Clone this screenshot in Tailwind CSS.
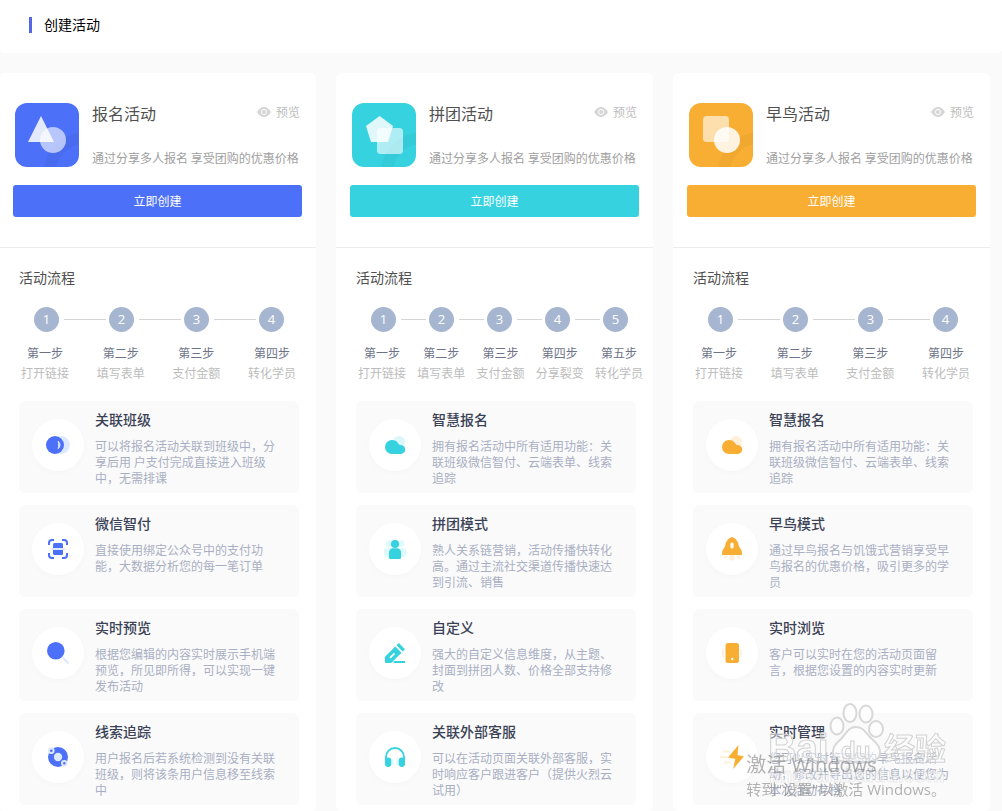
<!DOCTYPE html>
<html lang="zh-CN">
<head>
  <meta charset="UTF-8" />
  <meta name="viewport" content="width=device-width, initial-scale=1.0" />
  <title>创建活动</title>
  <script src="https://cdn.jsdelivr.net/npm/@tailwindcss/browser@4"></script>
</head>
<body class="overflow-x-hidden bg-[#fafafa] font-['Noto_Sans_CJK_SC',sans-serif] text-xs text-[#a9afc3]">

  <!-- Shared icons -->
  <svg class="hidden">
    <symbol id="eye" viewBox="0 0 14 10">
      <path d="M0 5C2 1.500 4.500 0 7 0s5 1.500 7 5c-2 3.500-4.500 5-7 5S2 8.500 0 5z" fill="#d6d6d6"/>
      <circle cx="7" cy="5" r="2.600" fill="none" stroke="#fff"/>
    </symbol>
    <symbol id="cloud" viewBox="0 0 24 24">
      <circle cx="16" cy="9" r="6" fill="currentColor" opacity=".18"/>
      <path d="M9 7a7 7 0 0 0 0 14h8.500a4.500 4.500 0 0 0 .5-9c-1.500 0-2.300-.6-3-2A7 7 0 0 0 9 7z" fill="currentColor"/>
    </symbol>
  </svg>

  <!-- Header -->
  <header class="flex h-[53px] items-center rounded-b bg-white pb-1 pl-[29px]">
    <span class="h-4 w-[3px] bg-[#5468e7]"></span>
    <h1 class="pb-0.5 pl-3 text-sm text-black">创建活动</h1>
  </header>

  <main class="-ml-px grid grid-cols-3 gap-5 pt-5 pr-3">
    <!-- 报名活动 -->
    <section class="rounded-md bg-white pb-1.5">
      <div class="border-b border-[#ececec] px-[14px] py-[30px]">
        <div class="flex gap-[13px] px-[2px]">
          <svg class="size-16 shrink-0 rounded-xl bg-[#4d70f8]" viewBox="0 0 64 64">
            <circle cx="70" cy="70" r="35" fill="none" stroke="#000" stroke-opacity=".04" stroke-width="12"/>
            <circle cx="38" cy="37" r="13" fill="#fff" opacity=".6"/>
            <path d="M26 13l13 26H13z" fill="#fff" opacity=".85"/>
          </svg>
          <div class="flex min-w-0 flex-1 flex-col justify-between">
            <div class="flex items-start justify-between">
              <h2 class="text-base leading-5 text-[#505050]">报名活动</h2>
              <a href="#" class="flex items-center gap-[5px] leading-[18px] text-[#bdbdbd]"><svg class="h-[10px] w-[14px]"><use href="#eye"/></svg>预览</a>
            </div>
            <p class="leading-[18px] whitespace-nowrap text-[#a0a0a0]">通过分享多人报名 享受团购的优惠价格</p>
          </div>
        </div>
        <button class="mt-[18px] h-8 w-full rounded-[3px] bg-[#4d70f8] text-white">立即创建</button>
      </div>
      <div class="pt-[19px]">
        <h3 class="pl-5 text-sm leading-5 text-[#505050]">活动流程</h3>
        <div class="mt-5 flex items-center pl-[35px] font-['Open_Sans',sans-serif] text-[13px] text-white">
          <span class="flex size-[25px] items-center justify-center rounded-full bg-[#a7b6d0]">1</span>
          <span class="mr-[3px] ml-[5px] h-px w-[42px] bg-[#d4d4d4]"></span>
          <span class="flex size-[25px] items-center justify-center rounded-full bg-[#a7b6d0]">2</span>
          <span class="mr-[3px] ml-[5px] h-px w-[42px] bg-[#d4d4d4]"></span>
          <span class="flex size-[25px] items-center justify-center rounded-full bg-[#a7b6d0]">3</span>
          <span class="mr-[3px] ml-[5px] h-px w-[42px] bg-[#d4d4d4]"></span>
          <span class="flex size-[25px] items-center justify-center rounded-full bg-[#a7b6d0]">4</span>
        </div>
        <ol class="mt-[11px] flex justify-between pr-5 pl-[22px] text-center leading-5 text-[#bcbcbc]">
          <li><p class="text-[#6d7489]">第一步</p>打开链接</li>
          <li><p class="text-[#6d7489]">第二步</p>填写表单</li>
          <li><p class="text-[#6d7489]">第三步</p>支付金额</li>
          <li><p class="text-[#6d7489]">第四步</p>转化学员</li>
        </ol>
      </div>
      <div class="mt-[18px] mr-[17px] ml-5 grid gap-3 text-[#4d70f8]">
        <article class="flex min-h-[92px] items-start gap-[11px] rounded-md bg-[#fafafa] pr-4 pl-[13px]">
          <div class="mt-[18px] flex size-[52px] shrink-0 items-center justify-center rounded-full bg-white shadow-[0_2px_6px_rgba(0,0,0,0.02)]">
            <svg class="size-6" viewBox="0 0 24 24">
              <circle cx="15" cy="12" r="9" fill="#dce8fe"/>
              <circle cx="9" cy="12" r="9" fill="currentColor"/>
              <path d="M12 8.300c2.600 1.800 2.600 5.600 0 7.400 1-2.500 1-4.900 0-7.400z" fill="#dce8fe" stroke="#dce8fe"/>
            </svg>
          </div>
          <div class="pt-2">
            <h4 class="text-sm leading-5 font-medium text-[#3b4256]">关联班级</h4>
            <p class="mt-[9px] leading-4 text-[#a9afc3]">可以将报名活动关联到班级中，分享后用 户支付完成直接进入班级中，无需排课</p>
          </div>
        </article>
        <article class="flex min-h-[92px] items-start gap-[11px] rounded-md bg-[#fafafa] pr-4 pl-[13px]">
          <div class="mt-[18px] flex size-[52px] shrink-0 items-center justify-center rounded-full bg-white shadow-[0_2px_6px_rgba(0,0,0,0.02)]">
            <svg class="size-6" viewBox="0 0 24 24">
              <path d="M3 8V6a3 3 0 0 1 3-3h2M16 3h2a3 3 0 0 1 3 3v2M21 16v2a3 3 0 0 1-3 3h-2M8 21H6a3 3 0 0 1-3-3v-2" fill="none" stroke="currentColor" stroke-width="2"/>
              <rect x="7" y="6" width="10" height="12" rx="1.500" fill="currentColor"/>
              <path d="M5 11h14v2H5z" fill="#dce8fe"/>
            </svg>
          </div>
          <div class="pt-2">
            <h4 class="text-sm leading-5 font-medium text-[#3b4256]">微信智付</h4>
            <p class="mt-[9px] leading-4 text-[#a9afc3]">直接使用绑定公众号中的支付功能，大数据分析您的每一笔订单</p>
          </div>
        </article>
        <article class="flex min-h-[92px] items-start gap-[11px] rounded-md bg-[#fafafa] pr-4 pl-[13px]">
          <div class="mt-[18px] flex size-[52px] shrink-0 items-center justify-center rounded-full bg-white shadow-[0_2px_6px_rgba(0,0,0,0.02)]">
            <svg class="size-6" viewBox="0 0 24 24">
              <path d="M17 17l5.500 5.500" stroke="#dce8fe" stroke-width="2"/>
              <circle cx="9.800" cy="9.800" r="8.800" fill="currentColor"/>
            </svg>
          </div>
          <div class="pt-2">
            <h4 class="text-sm leading-5 font-medium text-[#3b4256]">实时预览</h4>
            <p class="mt-[9px] leading-4 text-[#a9afc3]">根据您编辑的内容实时展示手机端预览，所见即所得，可以实现一键发布活动</p>
          </div>
        </article>
        <article class="flex min-h-[92px] items-start gap-[11px] rounded-md bg-[#fafafa] pr-4 pl-[13px]">
          <div class="mt-[18px] flex size-[52px] shrink-0 items-center justify-center rounded-full bg-white shadow-[0_2px_6px_rgba(0,0,0,0.02)]">
            <svg class="size-6" viewBox="0 0 24 24">
              <circle cx="12" cy="12" r="10" fill="currentColor"/>
              <circle cx="12" cy="12" r="4.200" fill="#dce8fe"/>
              <g fill="currentColor" stroke="#dce8fe" stroke-width="2">
                <circle cx="5.300" cy="5.700" r="2.300"/>
                <circle cx="18.300" cy="18.300" r="2.300"/>
              </g>
            </svg>
          </div>
          <div class="pt-2">
            <h4 class="text-sm leading-5 font-medium text-[#3b4256]">线索追踪</h4>
            <p class="mt-[9px] leading-4 text-[#a9afc3]">用户报名后若系统检测到没有关联班级，则将该条用户信息移至线索中</p>
          </div>
        </article>
      </div>
    </section>

    <!-- 拼团活动 -->
    <section class="rounded-md bg-white pb-1.5">
      <div class="border-b border-[#ececec] px-[14px] py-[30px]">
        <div class="flex gap-[13px] px-[2px]">
          <svg class="size-16 shrink-0 rounded-xl bg-[#36d2e0]" viewBox="0 0 64 64">
            <circle cx="70" cy="70" r="35" fill="none" stroke="#000" stroke-opacity=".03" stroke-width="12"/>
            <rect x="25" y="25" width="26" height="26" rx="3.500" fill="#fff" opacity=".6"/>
            <path d="M27.700 13L41 23l-5 16H19l-5-16z" fill="#fff" opacity=".85"/>
          </svg>
          <div class="flex min-w-0 flex-1 flex-col justify-between">
            <div class="flex items-start justify-between">
              <h2 class="text-base leading-5 text-[#505050]">拼团活动</h2>
              <a href="#" class="flex items-center gap-[5px] leading-[18px] text-[#bdbdbd]"><svg class="h-[10px] w-[14px]"><use href="#eye"/></svg>预览</a>
            </div>
            <p class="leading-[18px] whitespace-nowrap text-[#a0a0a0]">通过分享多人报名 享受团购的优惠价格</p>
          </div>
        </div>
        <button class="mt-[18px] h-8 w-full rounded-[3px] bg-[#36d2e0] text-white">立即创建</button>
      </div>
      <div class="pt-[19px]">
        <h3 class="pl-5 text-sm leading-5 text-[#505050]">活动流程</h3>
        <div class="mt-5 flex items-center pl-[35px] font-['Open_Sans',sans-serif] text-[13px] text-white">
          <span class="flex size-[25px] items-center justify-center rounded-full bg-[#a7b6d0]">1</span>
          <span class="mr-[3px] ml-[5px] h-px w-[25px] bg-[#d4d4d4]"></span>
          <span class="flex size-[25px] items-center justify-center rounded-full bg-[#a7b6d0]">2</span>
          <span class="mr-[3px] ml-[5px] h-px w-[25px] bg-[#d4d4d4]"></span>
          <span class="flex size-[25px] items-center justify-center rounded-full bg-[#a7b6d0]">3</span>
          <span class="mr-[3px] ml-[5px] h-px w-[25px] bg-[#d4d4d4]"></span>
          <span class="flex size-[25px] items-center justify-center rounded-full bg-[#a7b6d0]">4</span>
          <span class="mr-[3px] ml-[5px] h-px w-[25px] bg-[#d4d4d4]"></span>
          <span class="flex size-[25px] items-center justify-center rounded-full bg-[#a7b6d0]">5</span>
        </div>
        <ol class="mt-[11px] flex justify-between pr-[10px] pl-[22px] text-center leading-5 text-[#bcbcbc]">
          <li><p class="text-[#6d7489]">第一步</p>打开链接</li>
          <li><p class="text-[#6d7489]">第二步</p>填写表单</li>
          <li><p class="text-[#6d7489]">第三步</p>支付金额</li>
          <li><p class="text-[#6d7489]">第四步</p>分享裂变</li>
          <li><p class="text-[#6d7489]">第五步</p>转化学员</li>
        </ol>
      </div>
      <div class="mt-[18px] mr-[17px] ml-5 grid gap-3 text-[#36d2e0]">
        <article class="flex min-h-[92px] items-start gap-[11px] rounded-md bg-[#fafafa] pr-4 pl-[13px]">
          <div class="mt-[18px] flex size-[52px] shrink-0 items-center justify-center rounded-full bg-white shadow-[0_2px_6px_rgba(0,0,0,0.02)]">
            <svg class="size-6"><use href="#cloud"/></svg>
          </div>
          <div class="pt-2">
            <h4 class="text-sm leading-5 font-medium text-[#3b4256]">智慧报名</h4>
            <p class="mt-[9px] leading-4 text-[#a9afc3]">拥有报名活动中所有适用功能：关联班级微信智付、云端表单、线索追踪</p>
          </div>
        </article>
        <article class="flex min-h-[92px] items-start gap-[11px] rounded-md bg-[#fafafa] pr-4 pl-[13px]">
          <div class="mt-[18px] flex size-[52px] shrink-0 items-center justify-center rounded-full bg-white shadow-[0_2px_6px_rgba(0,0,0,0.02)]">
            <svg class="size-6" viewBox="0 0 24 24">
              <g fill="#dffafd">
                <rect x="2.700" y="3.500" width="18.600" height="6.500" rx="3"/>
                <rect x=".8" y="11" width="22.400" height="9" rx="3.500"/>
              </g>
              <circle cx="12" cy="7" r="4" fill="currentColor"/>
              <path d="M6 21v-5.500a4.500 4.500 0 0 1 3.500-4.300h5a4.500 4.500 0 0 1 3.500 4.300V21a1 1 0 0 1-1 1H7a1 1 0 0 1-1-1z" fill="currentColor"/>
            </svg>
          </div>
          <div class="pt-2">
            <h4 class="text-sm leading-5 font-medium text-[#3b4256]">拼团模式</h4>
            <p class="mt-[9px] leading-4 text-[#a9afc3]">熟人关系链营销，活动传播快转化高。通过主流社交渠道传播快速达到引流、销售</p>
          </div>
        </article>
        <article class="flex min-h-[92px] items-start gap-[11px] rounded-md bg-[#fafafa] pr-4 pl-[13px]">
          <div class="mt-[18px] flex size-[52px] shrink-0 items-center justify-center rounded-full bg-white shadow-[0_2px_6px_rgba(0,0,0,0.02)]">
            <svg class="size-6" viewBox="0 0 24 24">
              <path d="M12.300 5.500l6.200 6.200L8.200 22H3a1 1 0 0 1-1-1v-5.200zM13.500 4.300L15.800 2l6.200 6.200-2.300 2.300zM10.500 20H22v2H10.500z" fill="currentColor"/>
              <path d="M7 16.800l4.500-4.500" stroke="#fff" stroke-width="1.800"/>
            </svg>
          </div>
          <div class="pt-2">
            <h4 class="text-sm leading-5 font-medium text-[#3b4256]">自定义</h4>
            <p class="mt-[9px] leading-4 text-[#a9afc3]">强大的自定义信息维度，从主题、封面到拼团人数、价格全部支持修改</p>
          </div>
        </article>
        <article class="flex min-h-[92px] items-start gap-[11px] rounded-md bg-[#fafafa] pr-4 pl-[13px]">
          <div class="mt-[18px] flex size-[52px] shrink-0 items-center justify-center rounded-full bg-white shadow-[0_2px_6px_rgba(0,0,0,0.02)]">
            <svg class="size-6" viewBox="0 0 24 24">
              <path d="M9.500 14v6M14.500 14v6" stroke="#dffafd" stroke-width="2"/>
              <path d="M3 18v-6a9 9 0 0 1 18 0v6" fill="none" stroke="currentColor" stroke-width="1.800"/>
              <path d="M2 12.500h3a3.300 3.300 0 0 1 3.300 3.300v3a3.100 3.100 0 0 1-6.300 0zM22 12.500h-3a3.300 3.300 0 0 0-3.300 3.300v3a3.100 3.100 0 0 0 6.300 0z" fill="currentColor"/>
            </svg>
          </div>
          <div class="pt-2">
            <h4 class="text-sm leading-5 font-medium text-[#3b4256]">关联外部客服</h4>
            <p class="mt-[9px] leading-4 text-[#a9afc3]">可以在活动页面关联外部客服，实时响应客户跟进客户（提供火烈云试用）</p>
          </div>
        </article>
      </div>
    </section>

    <!-- 早鸟活动 -->
    <section class="rounded-md bg-white pb-1.5">
      <div class="border-b border-[#ececec] px-[14px] py-[30px]">
        <div class="flex gap-[13px] px-[2px]">
          <svg class="size-16 shrink-0 rounded-xl bg-[#f8ae33]" viewBox="0 0 64 64">
            <circle cx="70" cy="70" r="35" fill="none" stroke="#000" stroke-opacity=".03" stroke-width="12"/>
            <rect x="14" y="13" width="26" height="26" rx="3.500" fill="#fff" opacity=".6"/>
            <circle cx="38" cy="37" r="13" fill="#fff" opacity=".85"/>
          </svg>
          <div class="flex min-w-0 flex-1 flex-col justify-between">
            <div class="flex items-start justify-between">
              <h2 class="text-base leading-5 text-[#505050]">早鸟活动</h2>
              <a href="#" class="flex items-center gap-[5px] leading-[18px] text-[#bdbdbd]"><svg class="h-[10px] w-[14px]"><use href="#eye"/></svg>预览</a>
            </div>
            <p class="leading-[18px] whitespace-nowrap text-[#a0a0a0]">通过分享多人报名 享受团购的优惠价格</p>
          </div>
        </div>
        <button class="mt-[18px] h-8 w-full rounded-[3px] bg-[#f8ae33] text-white">立即创建</button>
      </div>
      <div class="pt-[19px]">
        <h3 class="pl-5 text-sm leading-5 text-[#505050]">活动流程</h3>
        <div class="mt-5 flex items-center pl-[35px] font-['Open_Sans',sans-serif] text-[13px] text-white">
          <span class="flex size-[25px] items-center justify-center rounded-full bg-[#a7b6d0]">1</span>
          <span class="mr-[3px] ml-[5px] h-px w-[42px] bg-[#d4d4d4]"></span>
          <span class="flex size-[25px] items-center justify-center rounded-full bg-[#a7b6d0]">2</span>
          <span class="mr-[3px] ml-[5px] h-px w-[42px] bg-[#d4d4d4]"></span>
          <span class="flex size-[25px] items-center justify-center rounded-full bg-[#a7b6d0]">3</span>
          <span class="mr-[3px] ml-[5px] h-px w-[42px] bg-[#d4d4d4]"></span>
          <span class="flex size-[25px] items-center justify-center rounded-full bg-[#a7b6d0]">4</span>
        </div>
        <ol class="mt-[11px] flex justify-between pr-5 pl-[22px] text-center leading-5 text-[#bcbcbc]">
          <li><p class="text-[#6d7489]">第一步</p>打开链接</li>
          <li><p class="text-[#6d7489]">第二步</p>填写表单</li>
          <li><p class="text-[#6d7489]">第三步</p>支付金额</li>
          <li><p class="text-[#6d7489]">第四步</p>转化学员</li>
        </ol>
      </div>
      <div class="mt-[18px] mr-[17px] ml-5 grid gap-3 text-[#f8ae33]">
        <article class="flex min-h-[92px] items-start gap-[11px] rounded-md bg-[#fafafa] pr-4 pl-[13px]">
          <div class="mt-[18px] flex size-[52px] shrink-0 items-center justify-center rounded-full bg-white shadow-[0_2px_6px_rgba(0,0,0,0.02)]">
            <svg class="size-6"><use href="#cloud"/></svg>
          </div>
          <div class="pt-2">
            <h4 class="text-sm leading-5 font-medium text-[#3b4256]">智慧报名</h4>
            <p class="mt-[9px] leading-4 text-[#a9afc3]">拥有报名活动中所有适用功能：关联班级微信智付、云端表单、线索追踪</p>
          </div>
        </article>
        <article class="flex min-h-[92px] items-start gap-[11px] rounded-md bg-[#fafafa] pr-4 pl-[13px]">
          <div class="mt-[18px] flex size-[52px] shrink-0 items-center justify-center rounded-full bg-white shadow-[0_2px_6px_rgba(0,0,0,0.02)]">
            <svg class="size-6" viewBox="0 0 24 24">
              <g fill="#fef0d9">
                <circle cx="12" cy="20.500" r="3"/>
                <circle cx="5.500" cy="20" r="1.500"/>
                <circle cx="18.500" cy="20" r="1.500"/>
              </g>
              <path d="M12 0C8.500 1 5.500 4.500 5.200 9L2.500 13.500Q2 14.500 2 18h20q0-3.500-.5-4.500L18.800 9C18.500 4.500 15.500 1 12 0z" fill="currentColor"/>
              <rect x="10.400" y="5.500" width="3.200" height="6" rx="1.600" fill="#fff"/>
            </svg>
          </div>
          <div class="pt-2">
            <h4 class="text-sm leading-5 font-medium text-[#3b4256]">早鸟模式</h4>
            <p class="mt-[9px] leading-4 text-[#a9afc3]">通过早鸟报名与饥饿式营销享受早鸟报名的优惠价格，吸引更多的学员</p>
          </div>
        </article>
        <article class="flex min-h-[92px] items-start gap-[11px] rounded-md bg-[#fafafa] pr-4 pl-[13px]">
          <div class="mt-[18px] flex size-[52px] shrink-0 items-center justify-center rounded-full bg-white shadow-[0_2px_6px_rgba(0,0,0,0.02)]">
            <svg class="size-6" viewBox="0 0 24 24">
              <path d="M3 8v8M21 8v8" stroke="#fef0d9" stroke-width="1.500"/>
              <rect x="5.500" y="2" width="13.500" height="20" rx="2.500" fill="currentColor"/>
              <circle cx="12.200" cy="18" r="1.200" fill="#fff"/>
            </svg>
          </div>
          <div class="pt-2">
            <h4 class="text-sm leading-5 font-medium text-[#3b4256]">实时浏览</h4>
            <p class="mt-[9px] leading-4 text-[#a9afc3]">客户可以实时在您的活动页面留言，根据您设置的内容实时更新</p>
          </div>
        </article>
        <article class="flex min-h-[92px] items-start gap-[11px] rounded-md bg-[#fafafa] pr-4 pl-[13px]">
          <div class="mt-[18px] flex size-[52px] shrink-0 items-center justify-center rounded-full bg-white shadow-[0_2px_6px_rgba(0,0,0,0.02)]">
            <svg class="size-6" viewBox="0 0 24 24">
              <path d="M3 6.500h7M0 12h8M4 17.500h7" stroke="#fef0d9" stroke-width="2"/>
              <path d="M18.500 0L8 12.500l7.300 1.500-2.300 10L24 11.500l-6.500-1.500z" fill="currentColor"/>
            </svg>
          </div>
          <div class="pt-2">
            <h4 class="text-sm leading-5 font-medium text-[#3b4256]">实时管理</h4>
            <p class="mt-[9px] leading-4 text-[#a9afc3]">您可以实时管理您的早鸟报名活动，修改并导出您的信息以便您为本次活动存档</p>
          </div>
        </article>
      </div>
    </section>
  </main>

  <!-- Watermark -->
  <svg class="pointer-events-none fixed right-[47px] bottom-0 h-[111px] w-[190px]" viewBox="0 0 190 111">
    <g fill="#fff" fill-opacity=".5" stroke="#d8d8d8" stroke-width="2">
      <ellipse cx="72" cy="26" rx="6.500" ry="8.500"/>
      <ellipse cx="85" cy="13" rx="6.500" ry="9"/>
      <ellipse cx="101" cy="14" rx="6.500" ry="8.500"/>
      <ellipse cx="111" cy="29" rx="7" ry="8"/>
      <path d="M91 27c-8 0-10 7-15 12-5 4-9 9-8 15 1 7 8 8 23 8s23-1 24-8c1-6-3-11-8-15-6-5-8-12-16-12z"/>
    </g>
    <g fill="#fff" fill-opacity=".4" stroke="#d2d2d2" stroke-width="1" class="font-bold">
      <text x="3" y="61" font-size="39" font-family="Liberation Sans">Bai</text>
      <text x="76" y="59" font-size="24" font-family="Liberation Sans">du</text>
      <text x="119" y="60" font-size="31" font-family="Noto Sans CJK SC">经验</text>
      <text x="4" y="82" font-size="20" font-family="Liberation Sans" stroke-opacity=".4">jingyan.baidu.com</text>
    </g>
  </svg>

  <!-- System activation notice -->
  <div class="pointer-events-none fixed right-14 bottom-3 font-['Open_Sans','Noto_Sans_CJK_SC',sans-serif] text-[#808080]/60">
    <p class="text-xl leading-7">激活 Windows</p>
    <p class="text-[15px] leading-5">转到"设置"以激活 Windows。</p>
  </div>
</body>
</html>
